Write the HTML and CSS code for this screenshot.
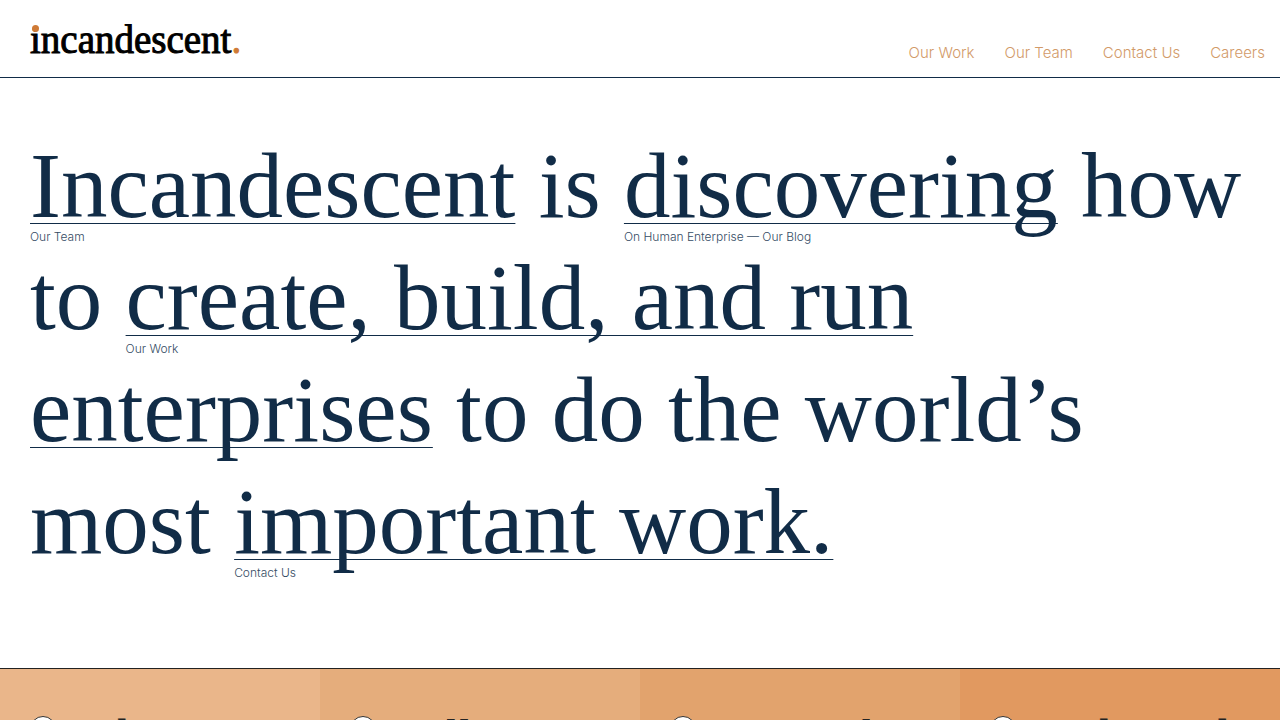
FILE: index.html
```html
<!DOCTYPE html>
<html lang="en">
<head>
<meta charset="utf-8">
<meta name="viewport" content="width=device-width, initial-scale=1">
<title>Incandescent</title>
<link rel="stylesheet" href="styles.css">
</head>
<body>
<header class="site-header">
  <a class="logo" href="#">incandescent<span class="logo-dot">.</span></a>
  <nav class="nav">
    <a href="#">Our Work</a>
    <a href="#">Our Team</a>
    <a href="#">Contact Us</a>
    <a href="#">Careers</a>
  </nav>
</header>
<main>
  <h1 class="statement"><a href="#"><span class="label">Our Team</span>Incandescent</a> is <a href="#"><span class="label">On Human Enterprise — Our Blog</span>discovering</a> how to <a href="#"><span class="label">Our Work</span>create, build, and run enterprises</a> to do the world’s most <a href="#"><span class="label">Contact Us</span>important work.</a></h1>
  <section class="panels">
    <article class="panel panel-1"><span class="ring"></span><h2>Adapt</h2></article>
    <article class="panel panel-2"><span class="ring"></span><h2>Collect</h2></article>
    <article class="panel panel-3"><span class="ring"></span><h2>Research</h2></article>
    <article class="panel panel-4"><span class="ring"></span><h2>Wider ends</h2></article>
  </section>
</main>
</body>
</html>
```
FILE: styles.css
```css
* { box-sizing: border-box; }
body {
  margin: 0;
  background: #fff;
  color: #112c47;
  font-family: Inter, "Liberation Sans", sans-serif;
  font-weight: 300;
}
a { color: inherit; text-decoration: none; }

.site-header {
  display: flex;
  justify-content: space-between;
  align-items: flex-end;
  padding: 18px 15px 15px 30px;
  border-bottom: 1px solid #112c47;
}
.logo {
  position: relative;
  color: #000;
  font: 400 39px/44px "Liberation Serif", serif;
  -webkit-text-stroke: 1px currentColor;
}
.logo::before {
  content: "";
  position: absolute;
  left: 2px;
  top: 7px;
  width: 7px;
  height: 7px;
  border-radius: 50%;
  background: #cf7a36;
}
.logo-dot { color: #cf7a36; }
.nav {
  display: flex;
  gap: 30px;
  color: #d29a68;
  font-size: 15px;
  line-height: 18px;
}

.statement {
  margin: 0;
  padding: 52px 30px 90px;
  font: 400 93px/112px "Liberation Serif", serif;
}
.statement a {
  text-decoration: underline 1px;
  text-underline-offset: 6px;
  text-decoration-skip-ink: none;
}
.label {
  position: absolute;
  margin-top: 99px;
  color: #354c64;
  font: 300 12px/16px Inter, "Liberation Sans", sans-serif;
  white-space: nowrap;
}

.panels {
  display: grid;
  grid-template-columns: repeat(4, minmax(0, 1fr));
  border-top: 1px solid #222;
}
.panel {
  display: flex;
  align-items: flex-start;
  gap: 14px;
  padding: 47px 0 47px 30px;
  color: #222;
}
.panel-1 { background: #eab68a; }
.panel-2 { background: #e5ad7c; }
.panel-3 { background: #e2a36d; }
.panel-4 { background: #e19960; }
.ring {
  flex: none;
  width: 26px;
  height: 26px;
  border: 1px solid #333;
  border-radius: 50%;
  background: #fff;
}
.panel h2 {
  margin: 0;
  font: 400 48px/42px "Liberation Serif", serif;
}
```
